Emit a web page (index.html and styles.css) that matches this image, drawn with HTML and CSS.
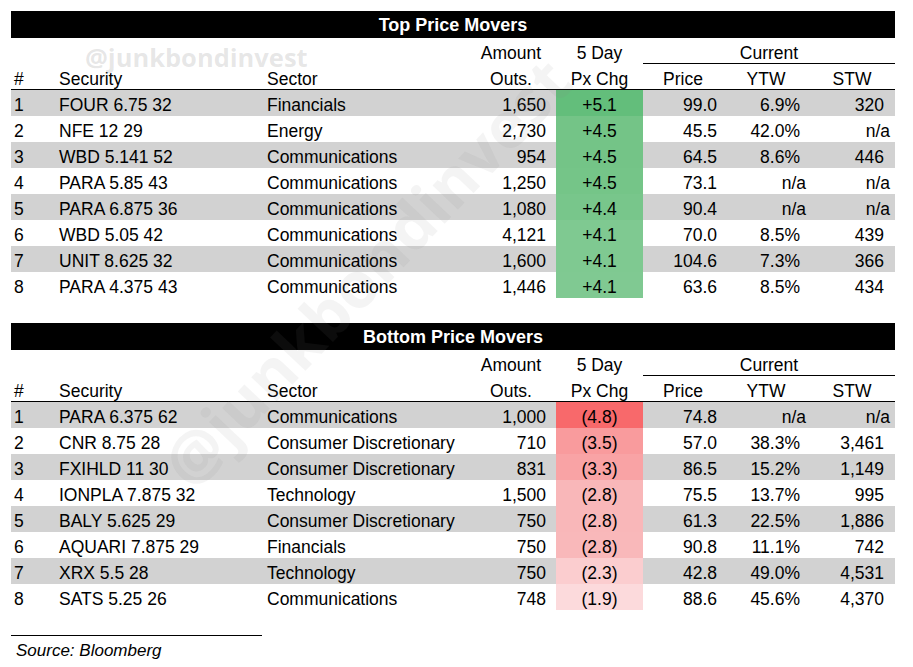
FILE: index.html
```html
<!DOCTYPE html>
<html>
<head>
<meta charset="utf-8">
<link rel="stylesheet" href="styles.css">
</head>
<body>
<div class="page">
  <section class="tbl">
    <div class="title">Top Price Movers</div>
    <div class="row head1">
      <div></div><div></div><div></div>
      <div class="c">Amount</div>
      <div class="c">5 Day</div>
      <div class="c current">Current</div>
    </div>
    <div class="row head2">
      <div class="n">#</div>
      <div class="l">Security</div>
      <div class="l">Sector</div>
      <div class="c">Outs.</div>
      <div class="c">Px Chg</div>
      <div class="c">Price</div>
      <div class="c">YTW</div>
      <div class="c">STW</div>
    </div>
    <div class="row alt"><div class="n">1</div><div class="l">FOUR 6.75 32</div><div class="l">Financials</div><div class="amt">1,650</div><div class="chg" style="background:#63be7b">+5.1</div><div class="px">99.0</div><div class="ytw">6.9%</div><div class="stw">320</div></div>
    <div class="row"><div class="n">2</div><div class="l">NFE 12 29</div><div class="l">Energy</div><div class="amt">2,730</div><div class="chg" style="background:#74c487">+4.5</div><div class="px">45.5</div><div class="ytw">42.0%</div><div class="stw na">n/a</div></div>
    <div class="row alt"><div class="n">3</div><div class="l">WBD 5.141 52</div><div class="l">Communications</div><div class="amt">954</div><div class="chg" style="background:#74c487">+4.5</div><div class="px">64.5</div><div class="ytw">8.6%</div><div class="stw">446</div></div>
    <div class="row"><div class="n">4</div><div class="l">PARA 5.85 43</div><div class="l">Communications</div><div class="amt">1,250</div><div class="chg" style="background:#75c588">+4.5</div><div class="px">73.1</div><div class="ytw na">n/a</div><div class="stw na">n/a</div></div>
    <div class="row alt"><div class="n">5</div><div class="l">PARA 6.875 36</div><div class="l">Communications</div><div class="amt">1,080</div><div class="chg" style="background:#78c68b">+4.4</div><div class="px">90.4</div><div class="ytw na">n/a</div><div class="stw na">n/a</div></div>
    <div class="row"><div class="n">6</div><div class="l">WBD 5.05 42</div><div class="l">Communications</div><div class="amt">4,121</div><div class="chg" style="background:#7fc991">+4.1</div><div class="px">70.0</div><div class="ytw">8.5%</div><div class="stw">439</div></div>
    <div class="row alt"><div class="n">7</div><div class="l">UNIT 8.625 32</div><div class="l">Communications</div><div class="amt">1,600</div><div class="chg" style="background:#7fc991">+4.1</div><div class="px">104.6</div><div class="ytw">7.3%</div><div class="stw">366</div></div>
    <div class="row"><div class="n">8</div><div class="l">PARA 4.375 43</div><div class="l">Communications</div><div class="amt">1,446</div><div class="chg" style="background:#80c992">+4.1</div><div class="px">63.6</div><div class="ytw">8.5%</div><div class="stw">434</div></div>
  </section>

  <section class="tbl second">
    <div class="title">Bottom Price Movers</div>
    <div class="row head1">
      <div></div><div></div><div></div>
      <div class="c">Amount</div>
      <div class="c">5 Day</div>
      <div class="c current">Current</div>
    </div>
    <div class="row head2">
      <div class="n">#</div>
      <div class="l">Security</div>
      <div class="l">Sector</div>
      <div class="c">Outs.</div>
      <div class="c">Px Chg</div>
      <div class="c">Price</div>
      <div class="c">YTW</div>
      <div class="c">STW</div>
    </div>
    <div class="row alt"><div class="n">1</div><div class="l">PARA 6.375 62</div><div class="l">Communications</div><div class="amt">1,000</div><div class="chg" style="background:#f8696b">(4.8)</div><div class="px">74.8</div><div class="ytw na">n/a</div><div class="stw na">n/a</div></div>
    <div class="row"><div class="n">2</div><div class="l">CNR 8.75 28</div><div class="l">Consumer Discretionary</div><div class="amt">710</div><div class="chg" style="background:#f99b9d">(3.5)</div><div class="px">57.0</div><div class="ytw">38.3%</div><div class="stw">3,461</div></div>
    <div class="row alt"><div class="n">3</div><div class="l">FXIHLD 11 30</div><div class="l">Consumer Discretionary</div><div class="amt">831</div><div class="chg" style="background:#f9a3a5">(3.3)</div><div class="px">86.5</div><div class="ytw">15.2%</div><div class="stw">1,149</div></div>
    <div class="row"><div class="n">4</div><div class="l">IONPLA 7.875 32</div><div class="l">Technology</div><div class="amt">1,500</div><div class="chg" style="background:#f9b7b9">(2.8)</div><div class="px">75.5</div><div class="ytw">13.7%</div><div class="stw">995</div></div>
    <div class="row alt"><div class="n">5</div><div class="l">BALY 5.625 29</div><div class="l">Consumer Discretionary</div><div class="amt">750</div><div class="chg" style="background:#f9b7b9">(2.8)</div><div class="px">61.3</div><div class="ytw">22.5%</div><div class="stw">1,886</div></div>
    <div class="row"><div class="n">6</div><div class="l">AQUARI 7.875 29</div><div class="l">Financials</div><div class="amt">750</div><div class="chg" style="background:#f9b8ba">(2.8)</div><div class="px">90.8</div><div class="ytw">11.1%</div><div class="stw">742</div></div>
    <div class="row alt"><div class="n">7</div><div class="l">XRX 5.5 28</div><div class="l">Technology</div><div class="amt">750</div><div class="chg" style="background:#fbcdcf">(2.3)</div><div class="px">42.8</div><div class="ytw">49.0%</div><div class="stw">4,531</div></div>
    <div class="row"><div class="n">8</div><div class="l">SATS 5.25 26</div><div class="l">Communications</div><div class="amt">748</div><div class="chg" style="background:#fcdadc">(1.9)</div><div class="px">88.6</div><div class="ytw">45.6%</div><div class="stw">4,370</div></div>
  </section>

  <footer class="source">Source: Bloomberg</footer>

  <div class="wm-small">@junkbondinvest</div>
  <div class="wm-big">@junkbondinvest</div>
</div>
</body>
</html>
```

FILE: styles.css
```css
html, body {
  margin: 0;
  padding: 0;
  background: #ffffff;
}

.page {
  position: relative;
  width: 913px;
  height: 667px;
  padding: 11px 0 0 11px;
  box-sizing: border-box;
  font-family: "Liberation Sans", Arial, sans-serif;
  font-size: 17.5px;
  color: #000000;
  overflow: hidden;
}

.tbl {
  width: 884px;
  display: flex;
  flex-direction: column;
}

.second {
  margin-top: 25px;
}

.title {
  height: 27px;
  box-sizing: border-box;
  padding-top: 2px;
  line-height: 25px;
  background: #000000;
  color: #ffffff;
  font-weight: bold;
  font-size: 18px;
  text-align: center;
}

.row {
  display: grid;
  grid-template-columns: 48px 208px 199px 90px 87px 80px 86px 86px;
  height: 26px;
}

.row > div {
  box-sizing: border-box;
  height: 26px;
  padding-top: 4px;
  line-height: 22px;
  white-space: nowrap;
}

.alt {
  background: #d2d2d2;
}

.head1 .current {
  grid-column: 6 / 9;
  border-bottom: 1px solid #000000;
}

.head2 {
  border-bottom: 1px solid #000000;
  box-sizing: border-box;
}

.n {
  text-align: left;
  padding-left: 3px;
}

.l {
  text-align: left;
}

.c {
  text-align: center;
}

.amt {
  text-align: right;
  padding-right: 10px;
}

.row > .chg {
  text-align: center;
  background: #ffffff;
}

.px {
  text-align: right;
  padding-right: 6px;
}

.ytw {
  text-align: right;
  padding-right: 9px;
}

.stw {
  text-align: right;
  padding-right: 11px;
}

.row > .ytw.na {
  padding-right: 3px;
}

.row > .stw.na {
  padding-right: 5px;
}

.source {
  margin-top: 25px;
  width: 251px;
  border-top: 1px solid #000000;
  padding: 4px 0 0 5px;
  box-sizing: border-box;
  font-style: italic;
  font-size: 17px;
  line-height: 22px;
}

.wm-small {
  position: absolute;
  left: 85px;
  top: 45px;
  font-family: "Open Sans", "Liberation Sans", sans-serif;
  font-weight: 700;
  font-size: 25.5px;
  line-height: 25px;
  color: rgba(128, 128, 128, 0.2);
  pointer-events: none;
  white-space: nowrap;
}

.wm-big {
  position: absolute;
  left: 366px;
  top: 272px;
  transform: translate(-50%, -50%) rotate(-46.6deg);
  font-family: "Open Sans", "Liberation Sans", sans-serif;
  font-weight: 700;
  font-size: 64px;
  line-height: 64px;
  color: rgba(128, 128, 128, 0.09);
  pointer-events: none;
  white-space: nowrap;
}
```
